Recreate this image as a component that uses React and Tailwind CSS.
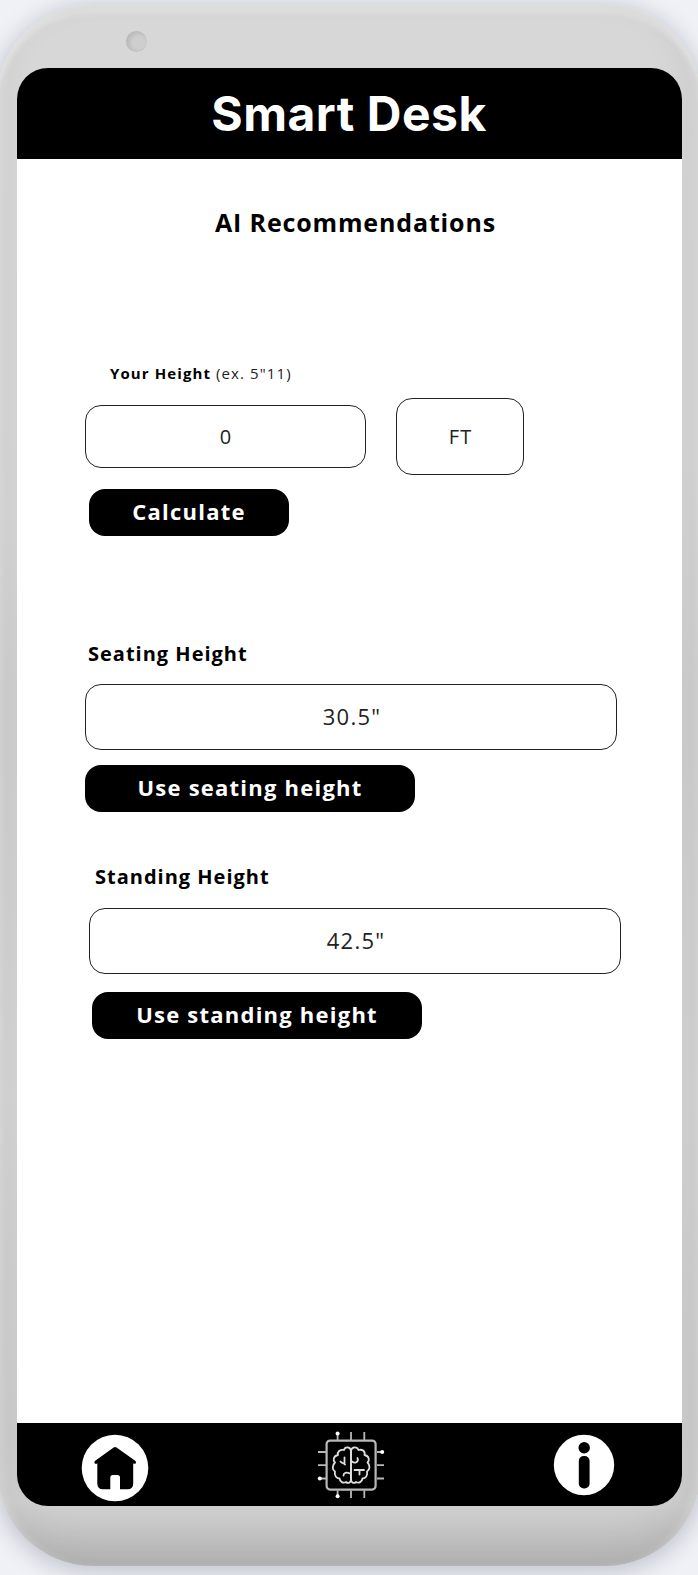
const sans = "font-['Open_Sans','Noto_Sans',sans-serif]";

function Field({ className, children }) {
  return (
    <div
      className={`flex items-center justify-center rounded-[16px] border-[1.5px] border-[#222] bg-white text-[#222] ${className}`}
    >
      {children}
    </div>
  );
}

function Button({ className, children }) {
  return (
    <button
      className={`flex h-[47px] items-center justify-center rounded-[16px] bg-black pb-[1px] text-[22px] font-bold tracking-[1.230px] whitespace-nowrap text-white ${className}`}
    >
      {children}
    </button>
  );
}

function HomeIcon() {
  return (
    <svg className="size-[68px]" viewBox="0 0 68 68">
      <circle cx="34" cy="34" r="33.3" fill="#fff" />
      <path
        d="M32.3 13.8 Q34 12.4 35.9 13.8 L54.2 26.8 Q55.6 28 54.8 29.2 Q54 30.2 52.2 29.6 V49.5 Q52.2 55.3 46.5 55.3 H39 V43.5 Q39 41 36.5 41 H31.8 Q29.3 41 29.3 43.5 V55.3 H22 Q16.3 55.3 16.3 49.5 V29.6 Q14.4 30.2 13.6 29.2 Q12.8 28 14.2 26.8 Z"
        fill="#000"
      />
    </svg>
  );
}

function BrainChipIcon() {
  return (
    <svg className="h-[68px] w-[68px]" viewBox="0 0 68 68" fill="none" stroke="#dedede" strokeWidth="1.800" strokeLinecap="round" strokeLinejoin="round">
      <rect x="9.600" y="9.600" width="49" height="49" rx="3.500" stroke="#b8b8b8" strokeWidth="2.200" />
      <path stroke="#b8b8b8" strokeLinecap="butt" d="M20.600 2V9M34 1V9M47.300 1V9M20.600 59.500V66M34 59.500V67M47.300 59.500V67M1 21H9M1 34.200H9M2.500 47.500H9M60 21H66M60 34.200H67M60 47.500H67" />
      <g fill="#fff" stroke="none">
        <circle cx="20.600" cy="2.600" r="2" />
        <circle cx="20.600" cy="65.200" r="2" />
        <circle cx="2.800" cy="47.500" r="2" />
        <circle cx="65.200" cy="21" r="2" />
      </g>
      <path d="M34 19.500C33 15.500 28 15.500 27 19C23 18 20 21 21 24C16.500 25 15.500 29 18 31.500C15 34.500 15 38.500 18 40.500C17 44.500 19.500 47.500 22.500 47.500C23 51 26 52.500 29 51C31 53 34 51.500 34 48.500Z" />
      <path d="M34 19.500C35 15.500 40 15.500 41.500 19C45.500 18 48.500 20.500 47.500 24C52 25 53 29 50.500 31.500C53.500 34.500 53 38.500 50 40.500C51 44.500 48.500 47.500 45.500 47.500C45 51 42 52.500 39 51C37 53 34 51.500 34 48.500" />
      <path d="M34 19V49M27.500 26.500V32.500M23.500 30.500C25 32.500 27 32 28 33.500M26.500 44.500C26.500 41.500 29.500 41 33 42.500M35 30.500C38 33 42 31 40.500 27M37.500 39H47M42.500 39V43.500" />
    </svg>
  );
}

function InfoIcon() {
  return (
    <svg className="size-[62px]" viewBox="0 0 62 62">
      <circle cx="31" cy="31" r="30.200" fill="#fff" />
      <circle cx="31.200" cy="13.800" r="5.700" />
      <rect x="25.800" y="22" width="10.800" height="32.500" rx="5" />
    </svg>
  );
}

export default function App() {
  return (
    <div className={`h-[1575px] w-[698px] overflow-hidden bg-[#eff1f6] pt-[4px] ${sans}`}>
      <div className="relative -ml-[3px] h-[1562px] w-[704px] rounded-[96px] bg-[linear-gradient(180deg,#d7d7d7_0%,#d5d5d5_30%,#cecece_45%,#d3d3d3_70%,#cbcbcb_92%,#d0d0d0_96%,#bababa_100%)] pt-[64px] pl-[20px] shadow-[0_4px_20px_4px_rgba(90,95,115,0.27),inset_0_12px_4px_-2px_rgba(255,255,255,0.2),inset_8px_0_8px_-4px_rgba(255,255,255,0.25),inset_-8px_0_8px_-4px_rgba(255,255,255,0.25),inset_-4px_-16px_40px_rgba(0,0,0,0.08)]">
        <div className="absolute top-[27px] left-[129px] size-[21px] rounded-full bg-[radial-gradient(circle_at_60%_55%,#cecece_35%,#b8b8b8_72%)]" />
        <div className="flex h-[1438px] w-[665px] flex-col overflow-hidden rounded-[31px] bg-white">
          <header className="flex h-[90.500px] shrink-0 items-center justify-center bg-black pt-[1px] pr-[1px]">
            <h1 className="font-['Inter',sans-serif] text-[48px] leading-none font-bold tracking-[0.500px] whitespace-nowrap text-white">Smart Desk</h1>
          </header>
          <main className="flex grow flex-col items-start pl-[68px] text-black">
            <h2 className="mt-[45px] ml-[130px] text-[25px] leading-[36px] font-bold tracking-[0.850px] whitespace-nowrap">AI Recommendations</h2>
            <p className="mt-[123px] ml-[25px] text-[15px] leading-[20px] tracking-[1.100px] whitespace-nowrap text-[#222]">
              <span className="font-bold text-black">Your Height</span> (ex. 5"11)
            </p>
            <div className="mt-[15px] flex items-center gap-[30px]">
              <Field className="h-[63px] w-[281px] pt-[2px] text-[20px]">0</Field>
              <Field className="h-[77px] w-[128px] pt-[2px] pl-[1px] text-[20px] tracking-[1px]">FT</Field>
            </div>
            <Button className="mt-[14px] ml-[4px] w-[200px]">Calculate</Button>
            <h3 className="mt-[102px] ml-[3px] text-[20px] leading-[32px] font-bold tracking-[1px] whitespace-nowrap">Seating Height</h3>
            <Field className="mt-[14px] h-[66px] w-[532px] pb-px pl-[2px] text-[22px] tracking-[1.200px]">30.5"</Field>
            <Button className="mt-[15px] w-[330px]">Use seating height</Button>
            <h3 className="mt-[49px] ml-[10px] text-[20px] leading-[32px] font-bold tracking-[1px] whitespace-nowrap">Standing Height</h3>
            <Field className="mt-[15px] ml-[4px] h-[66px] w-[532px] pb-px pl-[2px] text-[22px] tracking-[1.200px]">42.5"</Field>
            <Button className="mt-[18px] ml-[7px] w-[330px]">Use standing height</Button>
          </main>
          <footer className="flex h-[83.500px] w-[665px] shrink-0 items-start justify-between bg-black pt-[8px] pr-[67px] pl-[64px]">
            <div className="pt-[3px]"><HomeIcon /></div>
            <BrainChipIcon />
            <div className="pt-[3px]"><InfoIcon /></div>
          </footer>
        </div>
      </div>
    </div>
  );
}
